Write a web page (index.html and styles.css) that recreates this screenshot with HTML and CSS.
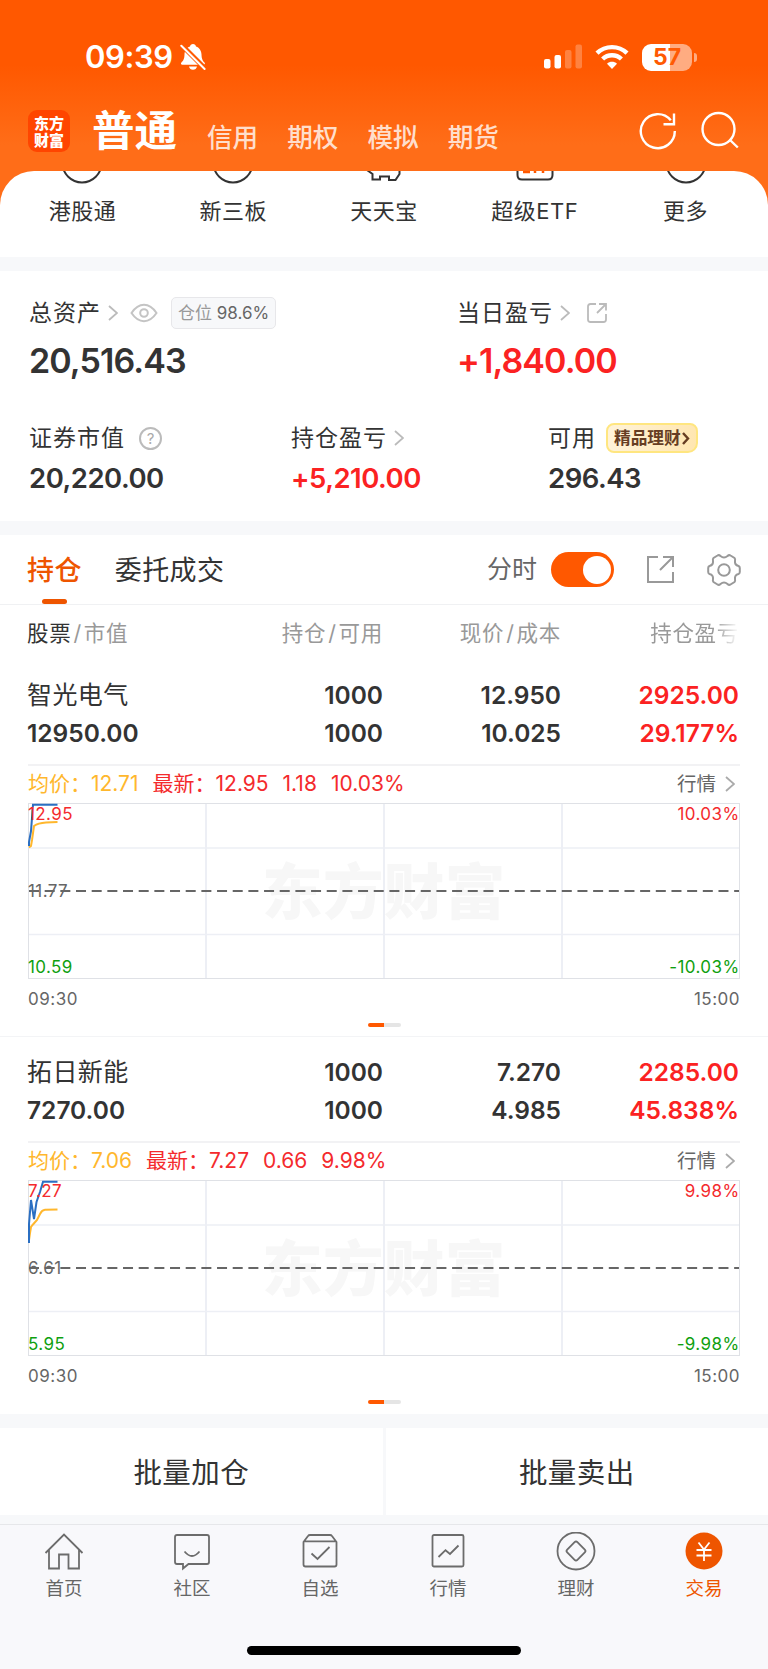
FILE: index.html
```html
<!DOCTYPE html>
<html lang="zh-CN">

<head>
    <meta charset="UTF-8">
    <meta name="viewport" content="width=device-width, initial-scale=1.0">
    <title>交易</title>
    <link rel="stylesheet" href="styles.css">
</head>

<body>

    <header class="header">
        <div class="status-bar">
            <span class="time">09:39</span>
            <svg class="bell" width="26" height="28" viewBox="0 0 26 28">
                <path class="bell-body" d="M13 1c1.600 0 2.800 1 3 2.400 3.800 1.400 5.400 4.600 5.500 8.200.1 4.500 1.300 6.400 3 8 .8.800.4 2.100-.8 2.100H2.200C.9 21.700.6 20.400 1.400 19.600c1.800-1.700 3-3.500 3.100-8C4.600 8 6.200 4.800 10 3.400 10.200 2 11.400 1 13 1zM9 23.500h8c-.3 2-2 3.300-4 3.300s-3.700-1.300-4-3.300z" />
                <path stroke="#ff5a03" stroke-width="5" d="M1 1.500l24.500 24.500" />
                <path stroke="#fff" stroke-width="2" stroke-linecap="round" d="M1.300 2.800l23.300 23.200" />
            </svg>
            <div class="status-icons">
                <svg class="signal" width="39" height="26" viewBox="0 0 39 26">
                    <rect x="0" y="15" width="6.500" height="9.500" rx="2" />
                    <rect x="10.500" y="11" width="6.500" height="13.500" rx="2" />
                    <rect x="21" y="6" width="6.500" height="18.500" rx="2" opacity=".25" />
                    <rect x="31.500" y="0.500" width="6.500" height="24" rx="2" opacity=".25" />
                </svg>
                <svg class="wifi" width="34" height="26" viewBox="0 0 34 26" stroke="#fff" stroke-width="4.400">
                    <path d="M2 9.200a21.500 21.500 0 0 1 30 0" />
                    <path d="M7.600 15a13.600 13.600 0 0 1 18.800 0" />
                    <path d="M17 25l-5-5.200c2.800-2.600 7.200-2.600 10 0z" fill="#fff" stroke="none" />
                </svg>
                <div class="battery"><span>57</span></div>
                <div class="battery-cap"></div>
            </div>
        </div>
        <nav class="top-nav">
            <div class="logo"><span>东方</span><span>财富</span></div>
            <span class="account active">普通</span>
            <span class="account">信用</span>
            <span class="account">期权</span>
            <span class="account">模拟</span>
            <span class="account">期货</span>
            <svg class="refresh" width="40" height="40" viewBox="0 0 40 40" stroke="#fff" stroke-width="2.400">
                <path d="M36.800 20a17 17 0 1 1-4-10.800" />
                <path d="M36 2.500v10.700H25.500" />
            </svg>
            <svg class="search" width="40" height="40" viewBox="0 0 40 40" stroke="#fff" stroke-width="2.400">
                <circle cx="18.500" cy="18" r="16" />
                <path d="M29.500 28.500l8.300 8" />
            </svg>
        </nav>
    </header>

    <section class="shortcuts">
        <div class="shortcut">
            <svg width="44" height="14" viewBox="0 0 44 14"><circle cx="22" cy="-8" r="19.500" /></svg>
            <span>港股通</span>
        </div>
        <div class="shortcut">
            <svg width="44" height="14" viewBox="0 0 44 14"><circle cx="22" cy="-8" r="19.500" /></svg>
            <span>新三板</span>
        </div>
        <div class="shortcut">
            <svg width="44" height="14" viewBox="0 0 44 14"><path d="M5 -1l5.500 4v5.500h7.500v-3h9v3.500h6.500l4-6V-1" /></svg>
            <span>天天宝</span>
        </div>
        <div class="shortcut">
            <svg width="44" height="14" viewBox="0 0 44 14"><path d="M4.500 -2v6q0 4.500 4.500 4.500h26q4.500 0 4.500-4.500v-6" /><path class="accent" d="M10 1h7M22 -1v3M30 -1v3" /></svg>
            <span>超级ETF</span>
        </div>
        <div class="shortcut">
            <svg width="44" height="14" viewBox="0 0 44 14"><circle cx="22" cy="-8" r="19.500" /></svg>
            <span>更多</span>
        </div>
    </section>

    <section class="assets">
        <div class="asset-row total">
            <div class="asset">
                <div class="asset-label">总资产
                    <svg class="chevron" width="10" height="16" viewBox="0 0 10 16"><path d="M1 1l8 7-8 7" /></svg>
                    <svg class="eye" width="28" height="20" viewBox="0 0 28 20"><path d="M1.500 10Q7 1.800 14 1.800T26.500 10Q21 18.200 14 18.200T1.500 10z" /><circle cx="14" cy="10" r="3.800" /></svg>
                    <span class="position">仓位 <b>98.6%</b></span>
                </div>
                <div class="asset-value">20,516.43</div>
            </div>
            <div class="asset">
                <div class="asset-label">当日盈亏
                    <svg class="chevron" width="10" height="16" viewBox="0 0 10 16"><path d="M1 1l8 7-8 7" /></svg>
                    <svg class="share-small" width="22" height="22" viewBox="0 0 22 22"><path d="M10 2H4.500Q2 2 2 4.500v13Q2 20 4.500 20h13q2.500 0 2.500-2.500V12M13 2h7v6.500M20 2l-9 9" /></svg>
                </div>
                <div class="asset-value red">+1,840.00</div>
            </div>
        </div>
        <div class="asset-row detail">
            <div class="asset">
                <div class="asset-label">证券市值 <span class="help">?</span></div>
                <div class="asset-value">20,220.00</div>
            </div>
            <div class="asset">
                <div class="asset-label">持仓盈亏
                    <svg class="chevron" width="10" height="16" viewBox="0 0 10 16"><path d="M1 1l8 7-8 7" /></svg>
                </div>
                <div class="asset-value red">+5,210.00</div>
            </div>
            <div class="asset">
                <div class="asset-label">可用
                    <span class="promo">精品理财<svg width="8" height="13" viewBox="0 0 8 13"><path d="M1 1l5 5.500-5 5.500" /></svg></span>
                </div>
                <div class="asset-value">296.43</div>
            </div>
        </div>
    </section>

    <section class="holdings">
        <div class="tabs">
            <span class="tab active">持仓</span>
            <span class="tab">委托成交</span>
            <div class="tools">
                <span>分时</span>
                <div class="toggle"></div>
                <svg class="share" width="30" height="30" viewBox="0 0 30 30"><path d="M12 2H2v25h25V17M17 2h10v10M27 2L14 15" /></svg>
                <svg class="gear" width="34" height="34" viewBox="0 0 34 34"><path d="M10.500 2.500Q12 1.500 13.500 3Q17 6 20.500 3Q22 1.500 23.500 2.500L27.500 5Q28.500 6 28 8Q27.500 12 31.500 13Q32.800 13.500 32.800 15V19Q32.800 20.500 31.500 21Q27.500 22 28 26Q28.500 28 27.500 29L23.500 31.500Q22 32.500 20.500 31Q17 28 13.500 31Q12 32.500 10.500 31.500L6.500 29Q5.500 28 6 26Q6.500 22 2.500 21Q1.200 20.500 1.200 19V15Q1.200 13.500 2.500 13Q6.500 12 6 8Q5.500 6 6.500 5z" /><circle cx="17" cy="17" r="5.800" /></svg>
            </div>
        </div>

        <div class="grid-row table-head">
            <span><em>股票</em><i>/</i>市值</span>
            <span>持仓<i>/</i>可用</span>
            <span>现价<i>/</i>成本</span>
            <span class="fade">持仓盈亏</span>
        </div>

        <article class="stock">
            <div class="grid-row quote">
                <span class="name">智光电气</span><span>1000</span><span>12.950</span><span class="red">2925.00</span>
                <span>12950.00</span><span>1000</span><span>10.025</span><span class="red">29.177%</span>
            </div>
            <div class="chart-info">
                <span class="avg">均价：12.71</span>
                <span class="latest">最新：12.95</span>
                <span class="latest">1.18</span>
                <span class="latest">10.03%</span>
                <a class="more">行情
                    <svg class="chevron" width="10" height="16" viewBox="0 0 10 16"><path d="M1 1l8 7-8 7" /></svg>
                </a>
            </div>
            <svg class="chart" width="712" height="177" viewBox="0 0 712 177">
                <text class="watermark" x="234" y="111">东方财富</text>
                <path class="grid" d="M178 1v174M356 1v174M534 1v174" />
                <path class="grid thin" d="M0 45h711M0 131.500h711" />
                <rect class="frame" x="0.500" y="0.500" width="711" height="175" />
                <path class="middle" d="M1 88h710" />
                <path class="avg-line" d="M1 44.500L3 43 4 37 6 23Q10 20 18 19.500L29.500 19" />
                <path class="price-line" d="M1 43V39L3 28 5 1.800H29.500" />
                <text class="up" x="0" y="17">12.95</text>
                <text class="flat" x="0" y="94">11.77</text>
                <text class="down" x="0" y="170">10.59</text>
                <text class="up end" x="711.500" y="17">10.03%</text>
                <text class="down end" x="711.500" y="170">-10.03%</text>
            </svg>
            <div class="chart-time"><span>09:30</span><span>15:00</span></div>
            <div class="pager"></div>
        </article>

        <article class="stock">
            <div class="grid-row quote">
                <span class="name">拓日新能</span><span>1000</span><span>7.270</span><span class="red">2285.00</span>
                <span>7270.00</span><span>1000</span><span>4.985</span><span class="red">45.838%</span>
            </div>
            <div class="chart-info">
                <span class="avg">均价：7.06</span>
                <span class="latest">最新：7.27</span>
                <span class="latest">0.66</span>
                <span class="latest">9.98%</span>
                <a class="more">行情
                    <svg class="chevron" width="10" height="16" viewBox="0 0 10 16"><path d="M1 1l8 7-8 7" /></svg>
                </a>
            </div>
            <svg class="chart" width="712" height="177" viewBox="0 0 712 177">
                <text class="watermark" x="234" y="111">东方财富</text>
                <path class="grid" d="M178 1v174M356 1v174M534 1v174" />
                <path class="grid thin" d="M0 45h711M0 131.500h711" />
                <rect class="frame" x="0.500" y="0.500" width="711" height="175" />
                <path class="middle" d="M1 88h710" />
                <path class="avg-line" d="M1 60L2 53 3 47 5 44.500 9 40 12 34Q14 30 17 29.800L29.500 29.500" />
                <path class="price-line" d="M1 63V44L3 20 6 39 8.500 22 12 12 15 1.800H29.500" />
                <text class="up" x="0" y="17">7.27</text>
                <text class="flat" x="0" y="94">6.61</text>
                <text class="down" x="0" y="170">5.95</text>
                <text class="up end" x="711.500" y="17">9.98%</text>
                <text class="down end" x="711.500" y="170">-9.98%</text>
            </svg>
            <div class="chart-time"><span>09:30</span><span>15:00</span></div>
            <div class="pager"></div>
        </article>
    </section>

    <section class="batch">
        <div class="batch-button">批量加仓</div>
        <div class="batch-button">批量卖出</div>
    </section>

    <footer class="tabbar">
        <div class="tabbar-items">
            <div class="tabbar-item">
                <svg width="40" height="40" viewBox="0 0 40 40"><path d="M1.500 21L20 2.500 38.500 21M5 18v18.500h10V22.500h9.500v14H35V18" /></svg>
                <span>首页</span>
            </div>
            <div class="tabbar-item">
                <svg width="40" height="40" viewBox="0 0 40 40"><path d="M5 3h30q2 0 2 2v25q0 2-2 2H16.500l-5.500 4.500V32H5q-2 0-2-2V5q0-2 2-2zM12.500 19.500q7.500 9 15 0" /></svg>
                <span>社区</span>
            </div>
            <div class="tabbar-item">
                <svg width="40" height="40" viewBox="0 0 40 40"><path d="M3.500 10L8 4q.700-1 2-1h20q1.300 0 2 1l4.500 6v22.500q0 2-2 2h-29q-2 0-2-2zM3.500 9.300h33M11.500 21.500l6 5.500 12-12" /></svg>
                <span>自选</span>
            </div>
            <div class="tabbar-item">
                <svg width="40" height="40" viewBox="0 0 40 40"><rect x="4.500" y="3" width="31" height="31.500" rx="1.500" /><path d="M10.500 25l7-6.800 4.500 3.800 8.500-8.500" /></svg>
                <span>行情</span>
            </div>
            <div class="tabbar-item">
                <svg width="40" height="40" viewBox="0 0 40 40"><circle cx="20" cy="19" r="18.500" /><path d="M18.600 10.200q1.400-1.400 2.800 0l7.400 7.400q1.400 1.400 0 2.800l-7.400 7.400q-1.400 1.400-2.800 0l-7.400-7.400q-1.400-1.400 0-2.800z" /></svg>
                <span>理财</span>
            </div>
            <div class="tabbar-item active">
                <svg width="40" height="40" viewBox="0 0 40 40"><circle class="coin" cx="20" cy="19" r="18.500" /><path class="yen" d="M14.500 10.500l5.500 7 5.500-7M12.500 18h15M12.500 23.500h15M20 18v11" /></svg>
                <span>交易</span>
            </div>
        </div>
        <div class="home-indicator"></div>
    </footer>

</body>

</html>
```

FILE: styles.css
```css
* {
    box-sizing: border-box;
}

html {
    overflow: hidden;
}

body {
    font-family: Inter, "Noto Sans CJK SC", sans-serif;
    margin: 0;
    height: 1669px;
    overflow: hidden;
    color: #333;
    background-color: #f7f8fa;
}

svg {
    display: block;
    flex: none;
    fill: none;
}

.red {
    color: #fb2222;
}

/* header */
.header {
    height: 210px;
    background: linear-gradient(#ff5800 0, #ff5800 65px, #ff6d18 145px, #ff6d18 100%);
    color: #fff;
}

.status-bar {
    display: flex;
    align-items: center;
    height: 102px;
    padding: 12px 71px 0 85px;
}

.time {
    width: 89px;
    font-size: 31px;
    font-weight: 600;
    line-height: 36px;
    letter-spacing: -.4px;
}

.bell {
    margin-left: 6px;
}

.bell-body,
.signal {
    fill: #fff;
}

.status-icons {
    display: flex;
    align-items: center;
    margin-left: auto;
}

.wifi {
    margin: 0 13px 0 12px;
}

.battery {
    width: 50px;
    height: 27px;
    border-radius: 9px;
    background: linear-gradient(90deg, #fff 57%, #ffac81 57%);
    color: #ff5a03;
    font-size: 23px;
    font-weight: 700;
    line-height: 27px;
    text-align: center;
}

.battery-cap {
    width: 3px;
    height: 9px;
    margin-left: 2px;
    border-radius: 0 4px 4px 0;
    background-color: #ffac81;
}

.top-nav {
    display: flex;
    height: 69px;
    padding: 8px 28px 0;
}

.logo {
    display: flex;
    flex-direction: column;
    align-items: center;
    width: 42px;
    height: 42px;
    padding-top: 4px;
    border-radius: 9px;
    background-color: #ff4500;
    font-family: "Noto Sans CJK SC", sans-serif;
    font-size: 15px;
    font-weight: 900;
    line-height: 17px;
}

.account {
    margin: 13px 0 0 29px;
    font-size: 25.600px;
    font-weight: 500;
    line-height: 30px;
    color: rgba(255, 255, 255, .8);
}

.account.active {
    margin: -1px 0 0 22px;
    font-size: 42.500px;
    font-weight: 700;
    line-height: 44px;
    color: #fff;
}

.account.active + .account {
    margin-left: 30px;
}

.refresh {
    margin: 1px 0 0 auto;
}

.search {
    margin: 1px 0 0 22px;
}

/* shortcuts, scrolled partly under the header */
.shortcuts {
    display: grid;
    grid-template-columns: repeat(5, 1fr);
    height: 86px;
    margin-top: -39px;
    padding: 0 7px;
    border-radius: 34px 34px 0 0;
    background-color: #fff;
}

.shortcut {
    display: flex;
    flex-direction: column;
    align-items: center;
    font-size: 22px;
    line-height: 30px;
    letter-spacing: .5px;
}

.shortcut svg {
    margin-bottom: 11px;
    stroke: #333;
    stroke-width: 2;
}

.shortcut .accent {
    stroke: #ff5800;
    stroke-width: 2.500;
}

.chevron {
    stroke: #bbb;
    stroke-width: 1.800;
}

/* assets */
.assets {
    height: 250px;
    margin-top: 14px;
    padding: 24px 29px 0;
    background-color: #fff;
}

.asset-row {
    display: grid;
}

.total {
    grid-template-columns: 428px 1fr;
    height: 127px;
}

.detail {
    grid-template-columns: 262px 257px 1fr;
}

.asset-label {
    display: flex;
    align-items: center;
    height: 36px;
    font-size: 23px;
    line-height: 34px;
    letter-spacing: 1px;
    white-space: nowrap;
}

.total .asset-label {
    height: 35px;
}

.asset-label .chevron {
    margin-left: 7px;
}

.asset-value {
    font-size: 27.500px;
    font-weight: 600;
    line-height: 40px;
    letter-spacing: -.5px;
}

.detail .asset-label {
    height: 32px;
}

.detail .asset-value {
    margin-top: 4px;
}

.total .asset-value {
    margin-top: 11px;
    font-size: 34px;
    letter-spacing: -.9px;
}

.eye {
    margin-left: 12px;
    stroke: #c4c4c4;
    stroke-width: 2;
}

.position {
    height: 32px;
    margin-left: 13px;
    padding: 0 6px;
    border: 1px solid #e7e7ea;
    border-radius: 5px;
    background-color: #f7f8fa;
    color: #999;
    font-size: 17px;
    line-height: 30px;
    letter-spacing: 0;
}

.position b {
    font-weight: 400;
    color: #666;
}

.share-small {
    margin-left: 16px;
    stroke: #bbb;
    stroke-width: 1.800;
}

.help {
    width: 23px;
    height: 23px;
    margin-left: 14px;
    border: 2px solid #bbb;
    border-radius: 50%;
    color: #aaa;
    font-size: 15px;
    line-height: 19px;
    letter-spacing: 0;
    text-align: center;
}

.promo {
    display: flex;
    align-items: center;
    height: 30px;
    margin-left: 10px;
    padding: 0 6px;
    border: 2px solid #ffe680;
    border-radius: 8px 8px 10px 8px;
    background: linear-gradient(100deg, #fff3da, #ffe6b0);
    color: #663d22;
    font-size: 16.700px;
    font-weight: 700;
    line-height: 26px;
    letter-spacing: 0;
}

.promo svg {
    stroke: #663d22;
    stroke-width: 2.400;
    margin-left: 1px;
}

/* holdings */
.holdings {
    margin-top: 14px;
    background-color: #fff;
}

.tabs {
    display: flex;
    height: 70px;
    padding: 0 27px;
    border-bottom: 1px solid #f0f1f3;
    font-size: 27px;
    line-height: 71px;
}

.tab {
    position: relative;
    margin-right: 33px;
    letter-spacing: .4px;
}

.tab.active {
    color: #ee5500;
    font-weight: 500;
}

.tab.active::after {
    content: "";
    position: absolute;
    left: 15px;
    bottom: 0;
    width: 25px;
    height: 5px;
    border-radius: 3px;
    background-color: #ee5500;
}

.tools {
    display: flex;
    align-items: center;
    margin-left: auto;
    font-size: 25px;
    color: #666;
}

.toggle {
    width: 63px;
    height: 35px;
    margin-left: 14px;
    padding: 3.500px;
    border-radius: 18px;
    background-color: #ff5800;
}

.toggle::after {
    content: "";
    display: block;
    width: 28px;
    height: 28px;
    margin-left: auto;
    border-radius: 50%;
    background-color: #fff;
}

.share {
    margin-left: 32px;
    stroke: #999;
    stroke-width: 2;
}

.gear {
    margin-left: 31px;
    stroke: #999;
    stroke-width: 2;
}

.grid-row {
    display: grid;
    grid-template-columns: 178px 178px 178px 178px;
    padding: 0 28px 0 27px;
}

.grid-row span {
    text-align: right;
}

.grid-row span:nth-child(4n + 1) {
    text-align: left;
}

.table-head {
    height: 55px;
    color: #999;
    font-size: 21.500px;
    line-height: 56px;
    letter-spacing: .7px;
}

.table-head em {
    font-style: normal;
    color: #333;
}

.table-head i {
    font-style: normal;
    margin: 0 2px;
}

.table-head .fade {
    -webkit-mask-image: linear-gradient(90deg, #000 86%, transparent);
    mask-image: linear-gradient(90deg, #000 86%, transparent);
}

.stock {
    height: 377px;
    border-bottom: 1px solid #f3f4f6;
}

.stock:last-child {
    border-bottom: 0;
}

.quote {
    height: 104px;
    padding-top: 16px;
    padding-right: 27px;
    font-size: 24.500px;
    font-weight: 600;
    grid-auto-rows: 38px;
    line-height: 38px;
}

.quote .name {
    font-size: 25px;
    font-weight: 400;
    letter-spacing: .4px;
}

.chart-info {
    display: flex;
    gap: 14px;
    height: 39px;
    margin: 0 28px;
    border-top: 2px solid #f2f2f4;
    font-size: 21px;
    line-height: 36px;
}

.avg {
    color: #ffb72d;
}

.latest {
    color: #f42a2d;
}

.more {
    display: flex;
    align-items: center;
    height: 36px;
    margin: 0 5px 0 auto;
    font-size: 19.500px;
    color: #666;
}

.more .chevron {
    margin-left: 9px;
    stroke: #aaa;
}

.chart {
    margin-left: 28px;
    font-size: 17px;
    letter-spacing: .4px;
}

.frame {
    stroke: #dfe1e6;
}

.grid {
    stroke: #edeff5;
    stroke-width: 2;
}

.thin {
    stroke-width: 1.500;
}

.middle {
    stroke: #666;
    stroke-width: 2;
    stroke-dasharray: 10 5.670;
}

.price-line {
    stroke: #2b6fc2;
    stroke-width: 2;
}

.avg-line {
    stroke: #ffb72d;
    stroke-width: 2;
}

.watermark {
    fill: #f7f7f7;
    font-family: "Noto Sans CJK SC", sans-serif;
    font-size: 60.500px;
    font-weight: 900;
}

.up {
    fill: #f42a2d;
}

.flat {
    fill: #666;
}

.down {
    fill: #0fa00f;
}

.end {
    text-anchor: end;
}

.chart-time {
    display: flex;
    justify-content: space-between;
    height: 38px;
    padding: 0 28px;
    color: #666;
    font-size: 17px;
    line-height: 38px;
    letter-spacing: .5px;
}

.pager {
    width: 33px;
    height: 4px;
    margin: 5px auto 0;
    border-radius: 2px;
    background: linear-gradient(90deg, #ff5800 50%, #e5e5e5 50%);
}

/* batch buttons */
.batch {
    display: grid;
    grid-template-columns: 1fr 1fr;
    gap: 3px;
    margin-top: 14px;
}

.batch-button {
    height: 87px;
    background-color: #fff;
    font-size: 28.500px;
    line-height: 89px;
    letter-spacing: .4px;
    text-align: center;
}

/* bottom tab bar */
.tabbar {
    height: 145px;
    margin-top: 9px;
    border-top: 1px solid #e6e7ea;
    background-color: #f8f8fb;
}

.tabbar-items {
    display: grid;
    grid-template-columns: repeat(6, 1fr);
    height: 121px;
    padding-top: 7px;
}

.tabbar-item {
    display: flex;
    flex-direction: column;
    align-items: center;
    color: #666;
    font-size: 18.500px;
    line-height: 30px;
}

.tabbar-item svg {
    margin-bottom: 1px;
    stroke: #6c6c6c;
    stroke-width: 1.800;
}

.tabbar-item.active {
    color: #ee5500;
}

.tabbar-item .coin {
    fill: #ee5500;
    stroke: none;
}

.tabbar-item .yen {
    stroke: #fff;
    stroke-width: 1.800;
}

.home-indicator {
    width: 274px;
    height: 9px;
    margin: 0 auto;
    border-radius: 5px;
    background-color: #000;
}
```
